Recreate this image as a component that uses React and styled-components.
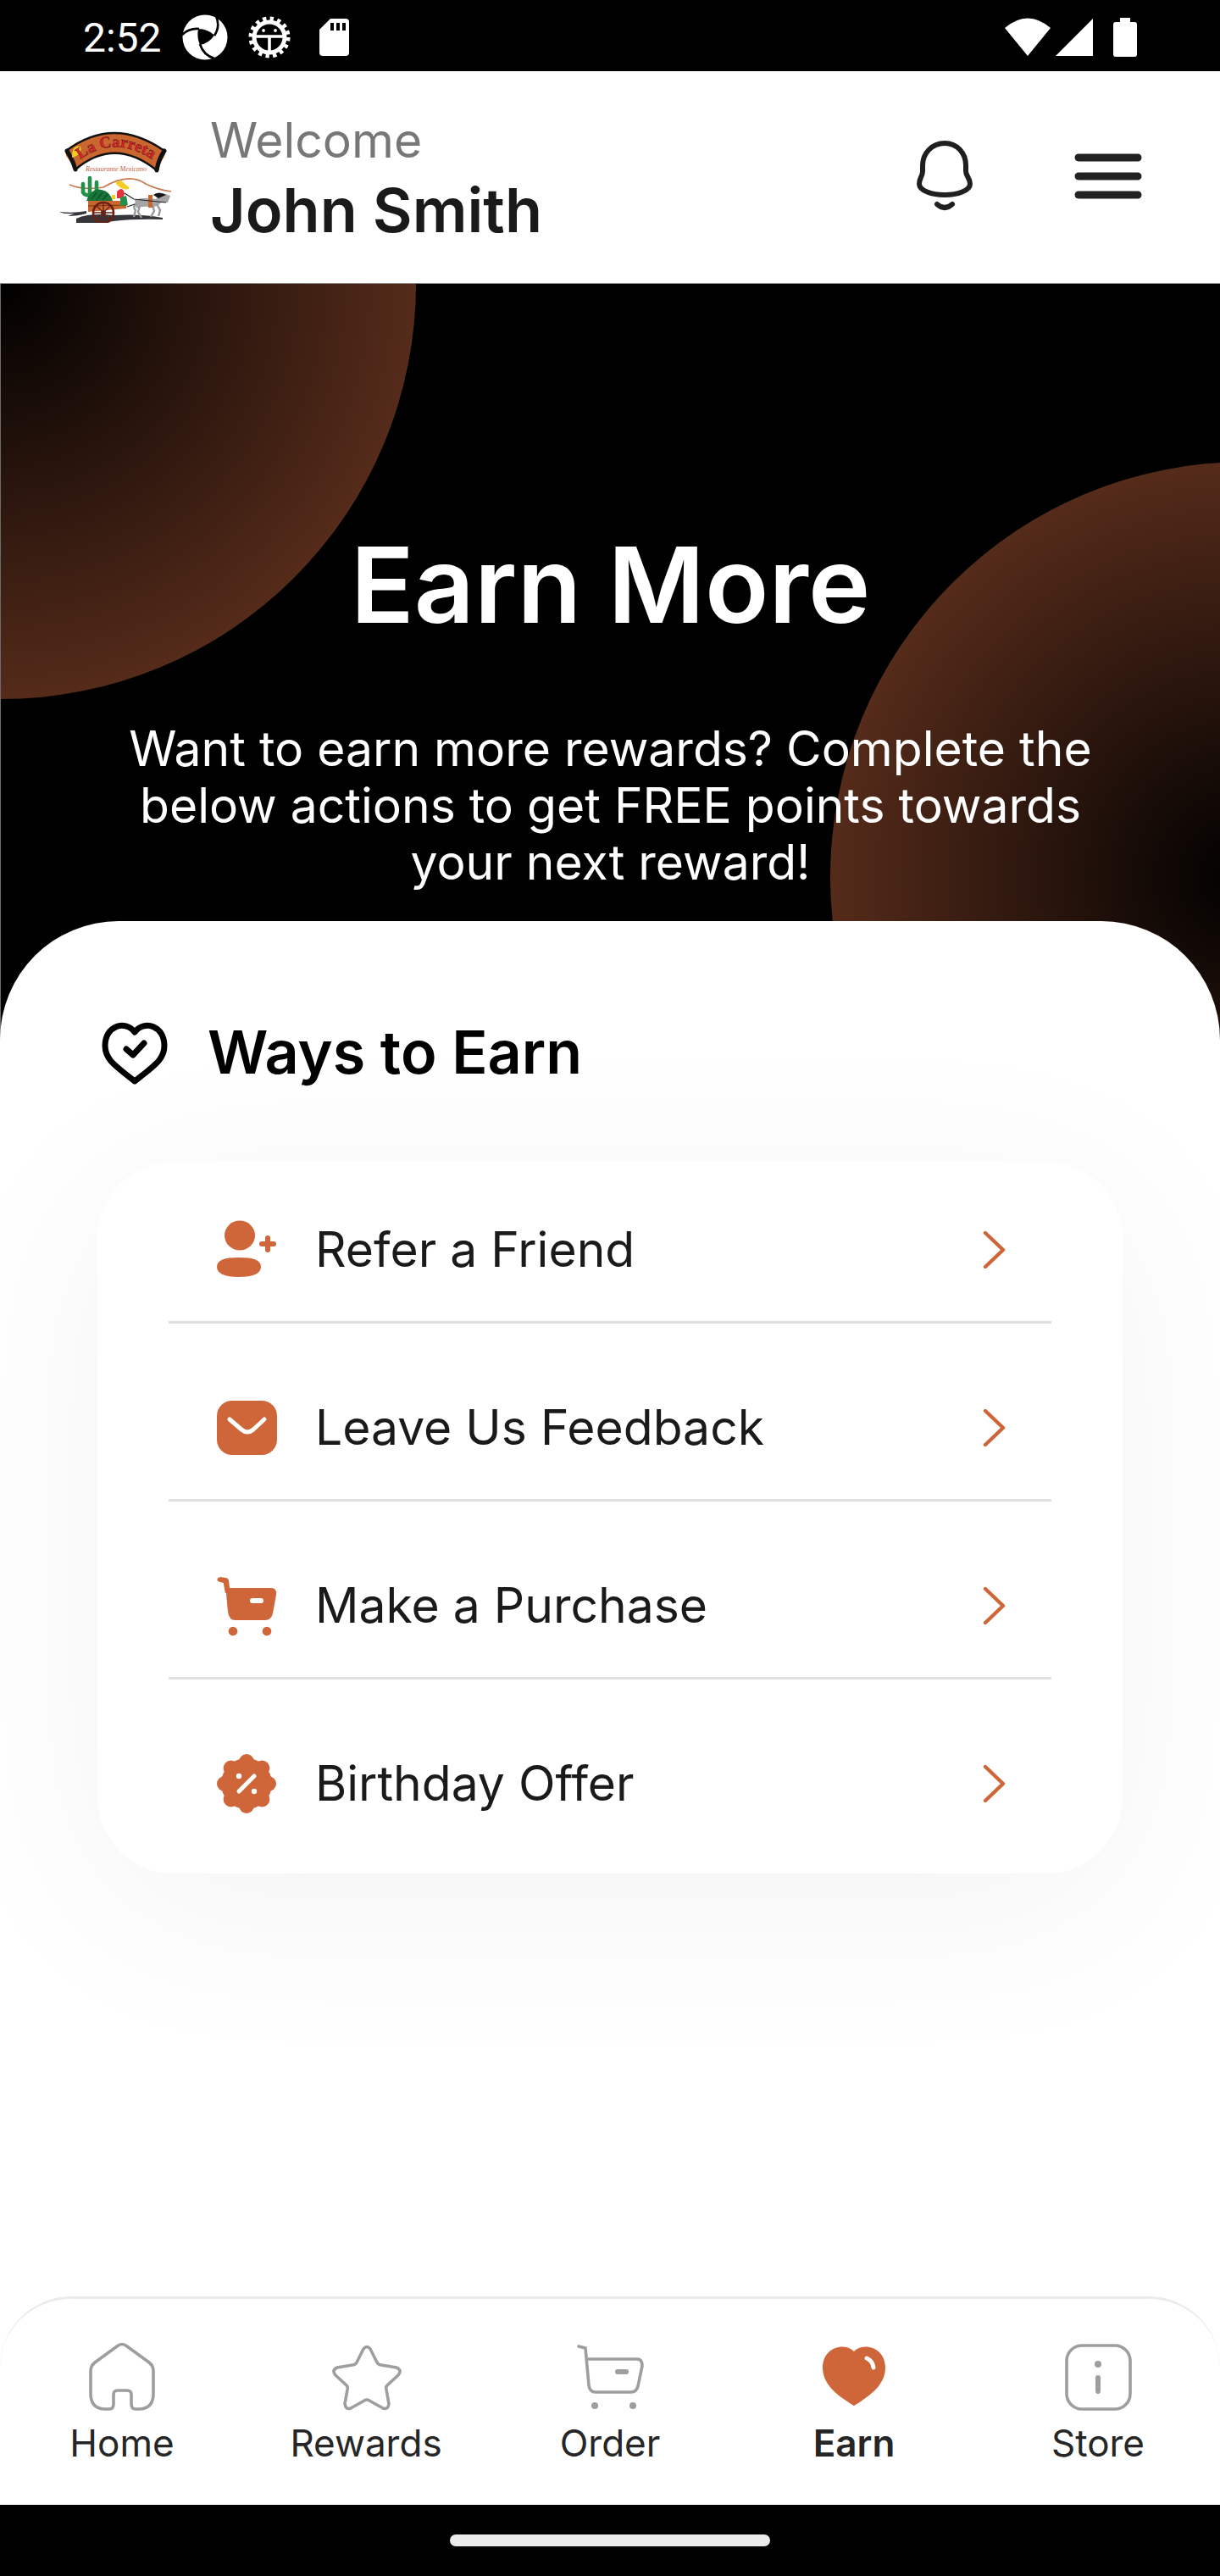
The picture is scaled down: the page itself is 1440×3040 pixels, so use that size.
import styled, { createGlobalStyle } from "styled-components";

const GlobalStyle = createGlobalStyle`
  * {
    box-sizing: border-box;
  }

  body {
    margin: 0;
    background: #ffffff;
    font-family: Inter, Roboto, sans-serif;
  }
`;

const Screen = styled.div`
  display: flex;
  flex-direction: column;
  min-height: 100vh;
`;

const StatusBar = styled.div`
  display: flex;
  align-items: center;
  justify-content: space-between;
  height: 84px;
  padding: 4px 98px 0;
  background: #000000;
  color: #ffffff;
  font-family: Roboto, sans-serif;
  font-size: 48px;
`;

const StatusGroup = styled.div`
  display: flex;
  align-items: center;
  gap: ${({ $gap }) => $gap}px;
`;

const Header = styled.header`
  display: flex;
  align-items: center;
  height: 251px;
  padding: 0 92px 2px 68px;
  border-bottom: 1px solid #8a8a8a;
`;

const Greeting = styled.div`
  flex: 1;
  margin-left: 44px;
`;

const Welcome = styled.p`
  margin: 0;
  color: #777777;
  font-size: 57px;
  line-height: 80px;
`;

const UserName = styled.p`
  margin: 0;
  color: #1a1a1a;
  font-size: 72px;
  font-weight: 600;
  line-height: 84px;
`;

const HeaderActions = styled.div`
  display: flex;
  gap: 120px;
`;

const IconButton = styled.button`
  display: flex;
  padding: 0;
  border: 0;
  background: none;
  cursor: pointer;
`;

const Hero = styled.section`
  position: relative;
  overflow: hidden;
  padding: 274px 140px 179px;
  border-left: 1px solid #6b6b6b;
  background: #000000;
  color: #ffffff;
  text-align: center;
`;

const Circle = styled.div`
  position: absolute;
  width: 980px;
  height: 980px;
  border-radius: 50%;
  background: radial-gradient(circle closest-side, #000000, #552b1a);
`;

const LeftCircle = styled(Circle)`
  top: -490px;
  left: -490px;
`;

const RightCircle = styled(Circle)`
  top: 210px;
  right: -520px;
`;

const HeroTitle = styled.h1`
  position: relative;
  margin: 0 0 79px;
  font-size: 124px;
  font-weight: 600;
  line-height: 162px;
`;

const HeroText = styled.p`
  position: relative;
  margin: 0;
  font-size: 57px;
  line-height: 67px;
`;

const Sheet = styled.main`
  position: relative;
  flex: 1;
  overflow: hidden;
  margin-top: -143px;
  padding: 110px 115px 200px;
  border-radius: 140px 140px 0 0;
  background: #ffffff;
`;

const SectionTitle = styled.h2`
  display: flex;
  align-items: center;
  gap: 46px;
  margin: 0 0 84px;
  color: #000000;
  font-size: 70px;
  font-weight: 600;
  line-height: 90px;
`;

const Card = styled.ul`
  margin: 0;
  padding: 0 84px 22px;
  list-style: none;
  border-radius: 90px;
  background: #ffffff;
  box-shadow: 0 40px 230px rgba(0, 0, 0, 0.05);
`;

const ItemLink = styled.a`
  display: flex;
  align-items: center;
  gap: 44px;
  height: 207px;
  padding: 38px 54px 0 55px;
  color: #1a1a1a;
  font-size: 57px;
  text-decoration: none;
`;

const CardItem = styled.li`
  & + & {
    border-top: 3px solid #dfdfdf;
  }

  &:first-child ${ItemLink} {
    height: 188px;
    padding-top: 19px;
  }
`;

const ItemLabel = styled.span`
  flex: 1;
`;

const BottomNav = styled.nav`
  display: flex;
  height: 246px;
  border-top: 3px solid #ebebeb;
  border-radius: 84px 84px 0 0;
  background: #ffffff;
`;

const NavLink = styled.a`
  display: flex;
  flex: 1;
  flex-direction: column;
  align-items: center;
  gap: 11px;
  padding-top: 50px;
  color: #262626;
  font-size: 44px;
  font-weight: ${({ $active }) => ($active ? 600 : 400)};
  line-height: 50px;
  text-decoration: none;
`;

const SystemBar = styled.div`
  display: flex;
  align-items: center;
  justify-content: center;
  height: 84px;
  background: #000000;
`;

const HomeIndicator = styled.div`
  width: 378px;
  height: 14px;
  border-radius: 7px;
  background: #ebebeb;
`;

const ORANGE = "#cf663a";
const GREY = "#9e9e9e";

const PinwheelIcon = () => (
  <svg width="54" height="54" viewBox="0 0 54 54">
    <circle cx="27" cy="27" r="26.5" fill="#fff" />
    <path d="M19 17Q30 17 38 24.5Q32 34 21 36Q17 27 19 17Z" fill="#000" />
    <path
      d="M0 24Q8 16 20 17M39 0Q46 13 38 25M38 52Q25 48 21 35"
      fill="none"
      stroke="#000"
      strokeWidth="2.6"
    />
  </svg>
);

const GearIcon = () => (
  <svg width="50" height="50" viewBox="0 0 50 50" fill="none" stroke="#fff">
    <circle cx="25" cy="25" r="18" strokeWidth="5" />
    <circle cx="25" cy="25" r="22" strokeWidth="5" strokeDasharray="4.3 4.34" />
    <path d="M9 24H41M25 24V41" strokeWidth="3.6" />
    <circle cx="18" cy="17" r="1.9" fill="#fff" stroke="none" />
    <circle cx="32" cy="17" r="1.9" fill="#fff" stroke="none" />
  </svg>
);

const SdCardIcon = () => (
  <svg width="46" height="46" viewBox="-10 0 46 46">
    <path d="M13 1H31Q35 1 35 5V41Q35 45 31 45H4Q0 45 0 41V14Z" fill="#fff" />
    <path d="M13 6H17V15H13ZM20 6H24V15H20ZM27 6H31V15H27Z" fill="#000" />
  </svg>
);

const WifiIcon = () => (
  <svg width="54" height="46" viewBox="0 0 54 46">
    <path d="M0 12Q27 -11 54 12L27 45Z" fill="#fff" />
  </svg>
);

const SignalIcon = () => (
  <svg width="44" height="46" viewBox="0 0 44 46">
    <path d="M0 45L44 1V45Z" fill="#fff" />
  </svg>
);

const BatteryIcon = () => (
  <svg width="28" height="46" viewBox="0 0 28 46">
    <path
      d="M8 0H20V5H25Q28 5 28 8V43Q28 46 25 46H3Q0 46 0 43V8Q0 5 3 5H8Z"
      fill="#fff"
    />
  </svg>
);

const LogoIcon = () => (
  <svg width="136" height="110" viewBox="0 0 136 110">
    <defs>
      <path id="signArc" d="M22 39Q67 1 120 41" />
    </defs>
    <path
      d="M10 25Q66 -17 126 25Q128 29 125 33L117 48Q67 8 21 47L13 35Q8 30 10 25Z"
      fill="#c9672f"
    />
    <path
      d="M10 25Q66 -17 126 25M21 47Q67 8 117 48"
      fill="none"
      stroke="#111"
      strokeWidth="2.6"
    />
    <path
      d="M11 25Q17 34 21 47M126 25Q119 35 117 48"
      fill="none"
      stroke="#111"
      strokeWidth="5"
      strokeLinecap="round"
    />
    <path d="M17 33Q17 17 27 20Q30 29 17 33Z" fill="#f4cc22" />
    <text
      fill="#e3222b"
      stroke="#3a1010"
      strokeWidth="0.4"
      fontFamily="Liberation Serif, serif"
      fontSize="19"
      fontWeight="700"
    >
      <textPath href="#signArc" startOffset="6">
        La Carreta
      </textPath>
    </text>
    <text
      x="69"
      y="49"
      fill="#c2603a"
      fontFamily="Liberation Serif, serif"
      fontSize="8"
      fontStyle="italic"
      textAnchor="middle"
    >
      Restaurante Mexicano
    </text>
    <path
      d="M14 65Q32 72 54 68Q84 50 104 64Q118 71 134 73"
      fill="none"
      stroke="#c9784f"
      strokeWidth="1.6"
    />
    <path
      d="M22 105Q36 98 66 101Q100 99 124 104L124 106Q90 105 66 108Q40 112 22 110ZM2 97Q20 99 34 96L34 99Q24 102 12 102L20 99Q8 100 2 97Z"
      fill="#35353a"
    />
    <path
      d="M38 82V57M30 64V74Q32 78 38 77M46 62V74Q44 78 38 77"
      fill="none"
      stroke="#23914a"
      strokeWidth="4.6"
      strokeLinecap="round"
    />
    <path d="M34 84Q40 68 52 71Q62 73 65 84Z" fill="#17753a" />
    <path
      d="M40 82L46 74M46 83L53 74M53 83L59 76"
      stroke="#0b4a24"
      strokeWidth="1.2"
    />
    <path d="M36 84H82L81 93L36 97Z" fill="#c9672f" />
    <path d="M36 90L81 89" stroke="#7f3413" strokeWidth="1.2" />
    <path d="M64 77H68V82H64Z" fill="#f4cc22" />
    <path d="M70 73Q77 66 79 76L77 81H70Z" fill="#e5343e" />
    <path d="M74 80L81 78L83 89L74 90Z" fill="#23914a" />
    <path d="M69 62Q76 58 79 64Q86 68 84 70Q76 72 69 64Z" fill="#f4cc22" />
    <circle cx="54" cy="98" r="12" fill="none" stroke="#682213" strokeWidth="2.6" />
    <circle cx="54" cy="98" r="3" fill="#682213" />
    <path
      d="M54 86V110M42 98H66M46 90L62 106M62 90L46 106"
      stroke="#682213"
      strokeWidth="1.3"
    />
    <path
      d="M91 83Q102 79 116 82L124 75L133 78L130 86L122 86Q118 92 108 91Q98 90 93 93Z"
      fill="#a5a5a8"
    />
    <path
      d="M93 87Q88 91 92 95L90 103M97 90L95 97L99 104M112 89L114 96L110 103M117 88L121 95L119 102"
      fill="none"
      stroke="#98989c"
      strokeWidth="2.4"
    />
    <path d="M113 77Q119 72 128 77L119 81Z" fill="#151515" />
    <path d="M107 77H112V92H107Z" fill="#c9672f" />
    <path
      d="M79 75L90 82L128 86M82 91L91 88"
      fill="none"
      stroke="#222"
      strokeWidth="1.2"
    />
  </svg>
);

const BellIcon = () => (
  <svg
    width="66"
    height="84"
    viewBox="0 0 66 84"
    fill="none"
    stroke="#1f1f1f"
    strokeWidth="6"
    strokeLinecap="round"
  >
    <path d="M33 3C18 3 7 15 7 29V36C7 42 3 44 3 51C3 59 18 64 33 64S63 59 63 51C63 44 58 42 58 36V29C58 15 48 3 33 3Z" />
    <path d="M24 75Q33 83 42 75" />
  </svg>
);

const MenuIcon = () => (
  <svg
    width="80"
    height="84"
    viewBox="0 0 80 84"
    stroke="#222222"
    strokeWidth="9"
    strokeLinecap="round"
  >
    <path d="M5 20H75M5 42H75M5 64H75" />
  </svg>
);

const HeartCheckIcon = () => (
  <svg
    width="84"
    height="84"
    viewBox="0 0 84 84"
    fill="none"
    stroke="#000000"
    strokeWidth="7"
    strokeLinecap="round"
    strokeLinejoin="round"
  >
    <path d="M44 18C56 3 79 11 79 34C79 50 68 57 44 76C20 57 9 50 9 34C9 11 32 3 44 18Z" />
    <path d="M34 38L42 45L55 31" />
  </svg>
);

const ReferIcon = () => (
  <svg width="74" height="74" viewBox="0 0 74 74" fill={ORANGE}>
    <ellipse cx="29" cy="20" rx="18" ry="17.5" />
    <path d="M28 46C45 46 54 49 54 57S45 69 28 69S2 65 2 57S11 46 28 46Z" />
    <path
      d="M62 23V37M55 30H69"
      stroke={ORANGE}
      strokeWidth="6"
      strokeLinecap="round"
    />
  </svg>
);

const MailIcon = () => (
  <svg width="74" height="74" viewBox="0 0 74 74">
    <rect x="2" y="5" width="71" height="64" rx="18" fill={ORANGE} />
    <path
      d="M17 27L31 39Q38 45 45 39L58 27"
      fill="none"
      stroke="#fff"
      strokeWidth="5"
      strokeLinecap="round"
    />
  </svg>
);

const CartSolidIcon = () => (
  <svg width="74" height="74" viewBox="0 0 74 74">
    <path
      d="M4 6L12 8Q13 24 15 44Q16 54 24 54H59Q66 54 68 46L72 24Q73 16 66 16H17L16 7Q15 4 12 4L6 3Z"
      fill={ORANGE}
    />
    <path
      d="M5 6L12 8L14 20"
      fill="none"
      stroke={ORANGE}
      strokeWidth="5"
      strokeLinecap="round"
    />
    <path d="M44 31H54" stroke="#fff" strokeWidth="6" strokeLinecap="round" />
    <circle cx="21" cy="67" r="5.3" fill={ORANGE} />
    <circle cx="61" cy="67" r="5.3" fill={ORANGE} />
  </svg>
);

const OfferIcon = () => (
  <svg width="74" height="74" viewBox="0 0 74 74">
    <g fill={ORANGE}>
      <circle cx="37" cy="37" r="30" />
      {[0, 45, 90, 135, 180, 225, 270, 315].map((angle) => (
        <circle
          key={angle}
          cx="37"
          cy="11"
          r="9"
          transform={`rotate(${angle} 37 37)`}
        />
      ))}
    </g>
    <path d="M28 46L46 28" stroke="#fff" strokeWidth="5" strokeLinecap="round" />
    <circle cx="28" cy="28" r="3.2" fill="#fff" />
    <circle cx="46" cy="46" r="3.2" fill="#fff" />
  </svg>
);

const ChevronIcon = () => (
  <svg
    width="30"
    height="50"
    viewBox="0 0 30 50"
    fill="none"
    stroke={ORANGE}
    strokeWidth="4.4"
    strokeLinecap="round"
    strokeLinejoin="round"
  >
    <path d="M6 5L27 25L6 45" />
  </svg>
);

const HomeIcon = () => (
  <svg
    width="84"
    height="84"
    viewBox="0 0 84 84"
    fill="none"
    stroke={GREY}
    strokeWidth="3.6"
    strokeLinejoin="round"
  >
    <path d="M36 6Q42 1 48 6L74 25Q79 29 79 35V62Q79 79 63 80H58Q53 80 53 74V63Q53 58 48 58H37Q32 58 32 63V74Q32 80 27 80H21Q5 79 5 62V35Q5 29 10 25Z" />
  </svg>
);

const StarIcon = () => (
  <svg
    width="84"
    height="84"
    viewBox="0 0 84 84"
    fill="none"
    stroke={GREY}
    strokeWidth="3.6"
    strokeLinejoin="round"
  >
    <path d="M39 9Q43 4 47 9L55 25Q57 28 60 28L78 31Q85 34 80 40L67 52Q65 54 66 57L69 74Q68 81 62 79L46 70Q43 68 40 70L24 79Q18 81 17 74L20 57Q21 54 19 52L6 40Q1 34 8 31L26 28Q29 28 31 25Z" />
  </svg>
);

const CartIcon = () => (
  <svg
    width="84"
    height="84"
    viewBox="0 0 84 84"
    fill="none"
    stroke={GREY}
    strokeWidth="3.6"
    strokeLinecap="round"
  >
    <path d="M5 6L13 8L17 52Q18 60 25 60H67Q73 60 75 53L80 29Q80 21 74 21H15" />
    <path d="M51 36H61" strokeWidth="6" />
    <circle cx="24" cy="76" r="4" fill={GREY} stroke="none" />
    <circle cx="69" cy="76" r="4" fill={GREY} stroke="none" />
  </svg>
);

const HeartIcon = () => (
  <svg width="84" height="84" viewBox="0 0 84 84">
    <path
      d="M42 12C54 0 79 8 79 31C79 52 60 65 42 76C24 65 5 52 5 31C5 8 30 0 42 12Z"
      fill={ORANGE}
    />
    <path
      d="M57 20Q64 23 65 31"
      fill="none"
      stroke="#fff"
      strokeWidth="5"
      strokeLinecap="round"
    />
  </svg>
);

const StoreIcon = () => (
  <svg width="84" height="84" viewBox="0 0 84 84">
    <rect
      x="5"
      y="5"
      width="75"
      height="75"
      rx="18"
      fill="none"
      stroke={GREY}
      strokeWidth="3.6"
    />
    <path d="M42 43V59" stroke={GREY} strokeWidth="6" strokeLinecap="round" />
    <circle cx="42" cy="27" r="4" fill={GREY} />
  </svg>
);

const waysToEarn = [
  { label: "Refer a Friend", Icon: ReferIcon },
  { label: "Leave Us Feedback", Icon: MailIcon },
  { label: "Make a Purchase", Icon: CartSolidIcon },
  { label: "Birthday Offer", Icon: OfferIcon },
];

const tabs = [
  { label: "Home", Icon: HomeIcon },
  { label: "Rewards", Icon: StarIcon },
  { label: "Order", Icon: CartIcon },
  { label: "Earn", Icon: HeartIcon, active: true },
  { label: "Store", Icon: StoreIcon },
];

const App = () => (
  <>
    <GlobalStyle />
    <Screen>
      <StatusBar>
        <StatusGroup $gap={24}>
          <span>2:52</span>
          <PinwheelIcon />
          <GearIcon />
          <SdCardIcon />
        </StatusGroup>
        <StatusGroup $gap={24}>
          <StatusGroup $gap={6}>
            <WifiIcon />
            <SignalIcon />
          </StatusGroup>
          <BatteryIcon />
        </StatusGroup>
      </StatusBar>

      <Header>
        <LogoIcon />
        <Greeting>
          <Welcome>Welcome</Welcome>
          <UserName>John Smith</UserName>
        </Greeting>
        <HeaderActions>
          <IconButton aria-label="Notifications">
            <BellIcon />
          </IconButton>
          <IconButton aria-label="Menu">
            <MenuIcon />
          </IconButton>
        </HeaderActions>
      </Header>

      <Hero>
        <LeftCircle />
        <RightCircle />
        <HeroTitle>Earn More</HeroTitle>
        <HeroText>
          Want to earn more rewards? Complete the below actions to get FREE
          points towards your next reward!
        </HeroText>
      </Hero>

      <Sheet>
        <SectionTitle>
          <HeartCheckIcon />
          Ways to Earn
        </SectionTitle>
        <Card>
          {waysToEarn.map(({ label, Icon }) => (
            <CardItem key={label}>
              <ItemLink href="#">
                <Icon />
                <ItemLabel>{label}</ItemLabel>
                <ChevronIcon />
              </ItemLink>
            </CardItem>
          ))}
        </Card>
      </Sheet>

      <BottomNav>
        {tabs.map(({ label, Icon, active }) => (
          <NavLink key={label} href="#" $active={active}>
            <Icon />
            {label}
          </NavLink>
        ))}
      </BottomNav>

      <SystemBar>
        <HomeIndicator />
      </SystemBar>
    </Screen>
  </>
);

export default App;
